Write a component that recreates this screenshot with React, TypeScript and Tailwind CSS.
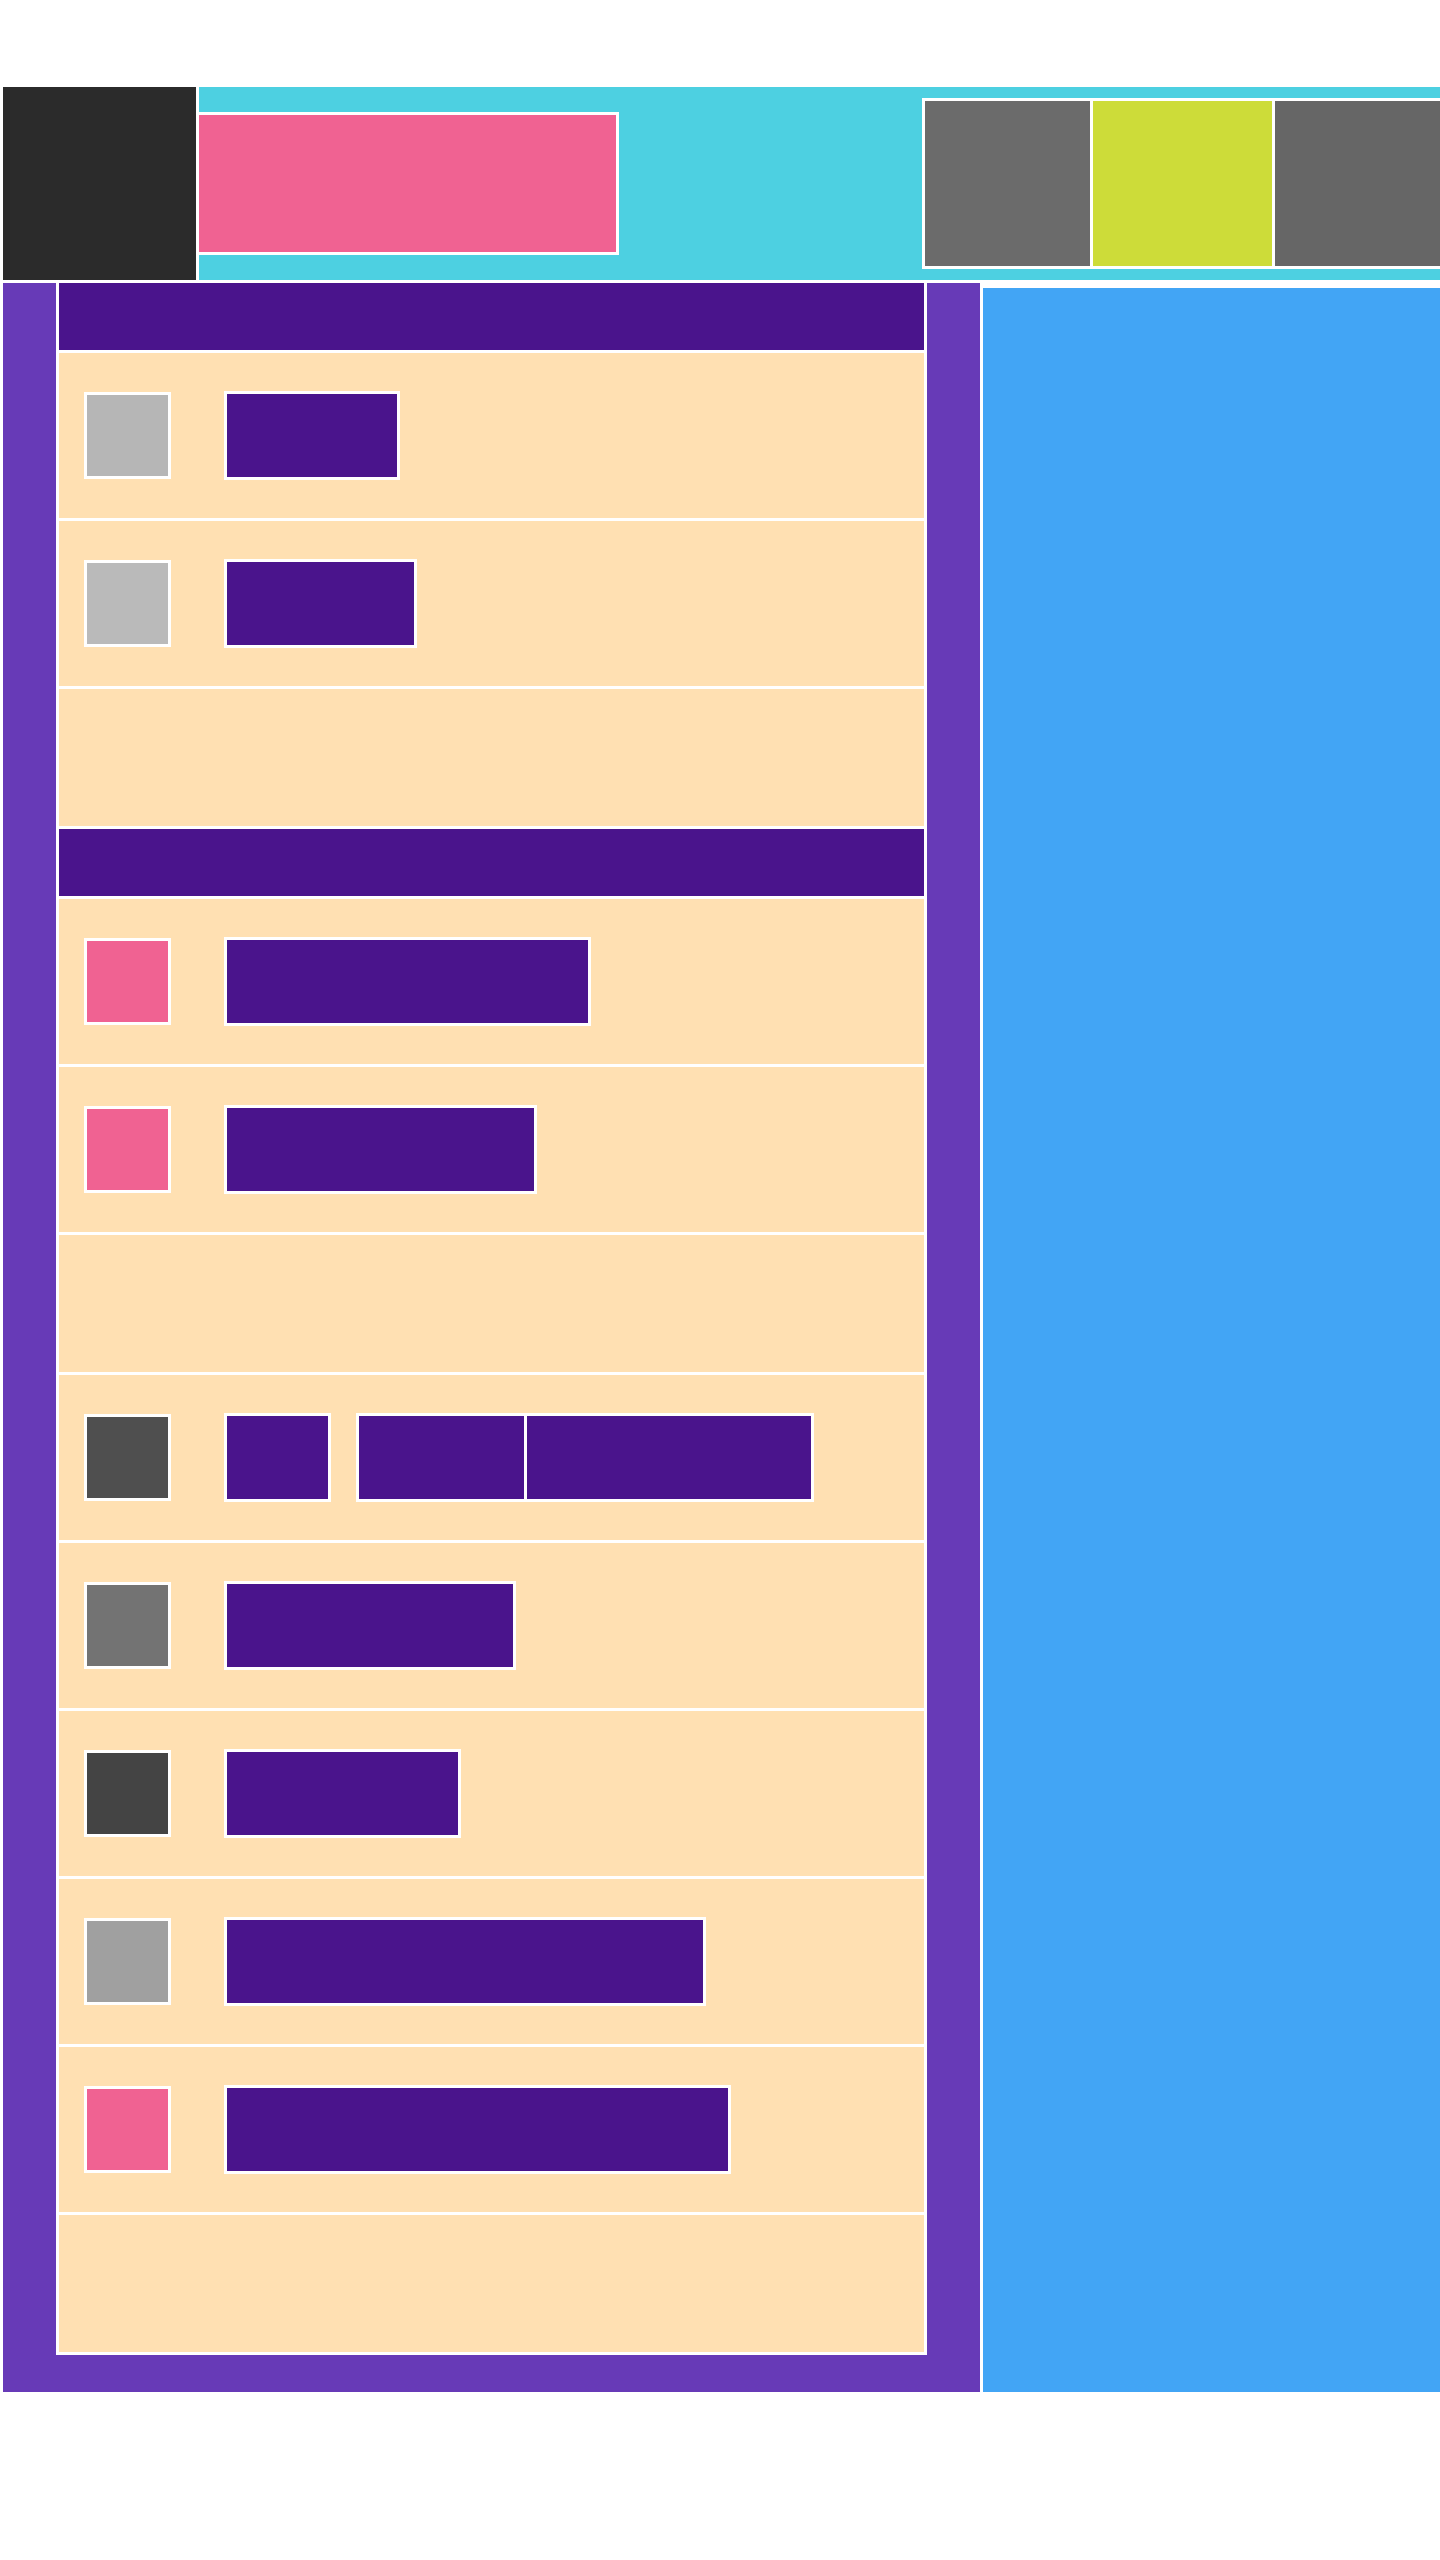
import React from "react";

type Row = { icon: string; labels: number[] };

function Icon({ color }: { color: string }) {
  return <div className="w-[87px] h-[87px] shrink-0 border-[3px] border-white" style={{ backgroundColor: color }} />;
}

function Label({ width }: { width: number }) {
  return <div className="h-[89px] shrink-0 border-[3px] border-white bg-[#4a148c]" style={{ width }} />;
}

function ItemRow({ row }: { row: Row }) {
  return (
    <div className="h-[165px] bg-[#ffe0b2] flex items-center pl-[25px]">
      <Icon color={row.icon} />
      <div className="ml-[53px]">
        <Label width={row.labels[0]} />
      </div>
    </div>
  );
}

function Bar() {
  return <div className="h-[67px] bg-[#4a148c]" />;
}

function Empty() {
  return <div className="h-[137px] bg-[#ffe0b2]" />;
}

export default function App() {
  const s1: Row[] = [
    { icon: "#b6b6b6", labels: [176] },
    { icon: "#bababa", labels: [193] },
  ];
  const s2: Row[] = [
    { icon: "#f06292", labels: [367] },
    { icon: "#f06292", labels: [313] },
  ];
  const s3: Row[] = [
    { icon: "#737373", labels: [292] },
    { icon: "#444444", labels: [237] },
    { icon: "#a0a0a0", labels: [482] },
    { icon: "#f06292", labels: [507] },
  ];
  return (
    <div className="w-[1440px] h-[2560px] bg-white overflow-hidden pt-[87px] pl-[3px]">
      {/* header */}
      <div className="flex h-[193px]">
        <div className="w-[193px] shrink-0 bg-[#2b2b2b]" />
        <div className="flex-1 flex items-start overflow-hidden bg-[#4dd0e1] border-l-[3px] border-white">
          <div className="mt-[25px] w-[420px] h-[143px] shrink-0 bg-[#f06292] border-y-[3px] border-r-[3px] border-white" />
          <div className="ml-[303px] mt-[11px] shrink-0 flex gap-[3px] bg-white p-[3px]">
            <div className="w-[165px] h-[165px] bg-[#6b6b6b]" />
            <div className="w-[179px] h-[165px] bg-[#cddc39]" />
            <div className="w-[200px] h-[165px] bg-[#666666]" />
          </div>
        </div>
      </div>

      {/* main */}
      <div className="flex mt-[3px]">
        <div className="w-[977px] shrink-0 bg-[#673ab7] px-[53px] pb-[37px]">
          <div className="flex flex-col gap-[3px] bg-white border-x-[3px] border-b-[3px] border-white">
            <Bar />
            {s1.map((r, i) => (
              <ItemRow key={"a" + i} row={r} />
            ))}
            <Empty />
            <Bar />
            {s2.map((r, i) => (
              <ItemRow key={"b" + i} row={r} />
            ))}
            <Empty />
            <div className="h-[165px] bg-[#ffe0b2] flex items-center pl-[25px]">
              <Icon color="#4f4f4f" />
              <div className="ml-[53px] flex items-center">
                <Label width={107} />
                <div className="ml-[25px] flex gap-[3px] bg-white p-[3px]">
                  <div className="w-[165px] h-[83px] bg-[#4a148c]" />
                  <div className="w-[284px] h-[83px] bg-[#4a148c]" />
                </div>
              </div>
            </div>
            {s3.map((r, i) => (
              <ItemRow key={"c" + i} row={r} />
            ))}
            <Empty />
          </div>
        </div>
        <div className="flex-1 ml-[3px] mt-[5px] bg-[#42a5f5]" />
      </div>
    </div>
  );
}
